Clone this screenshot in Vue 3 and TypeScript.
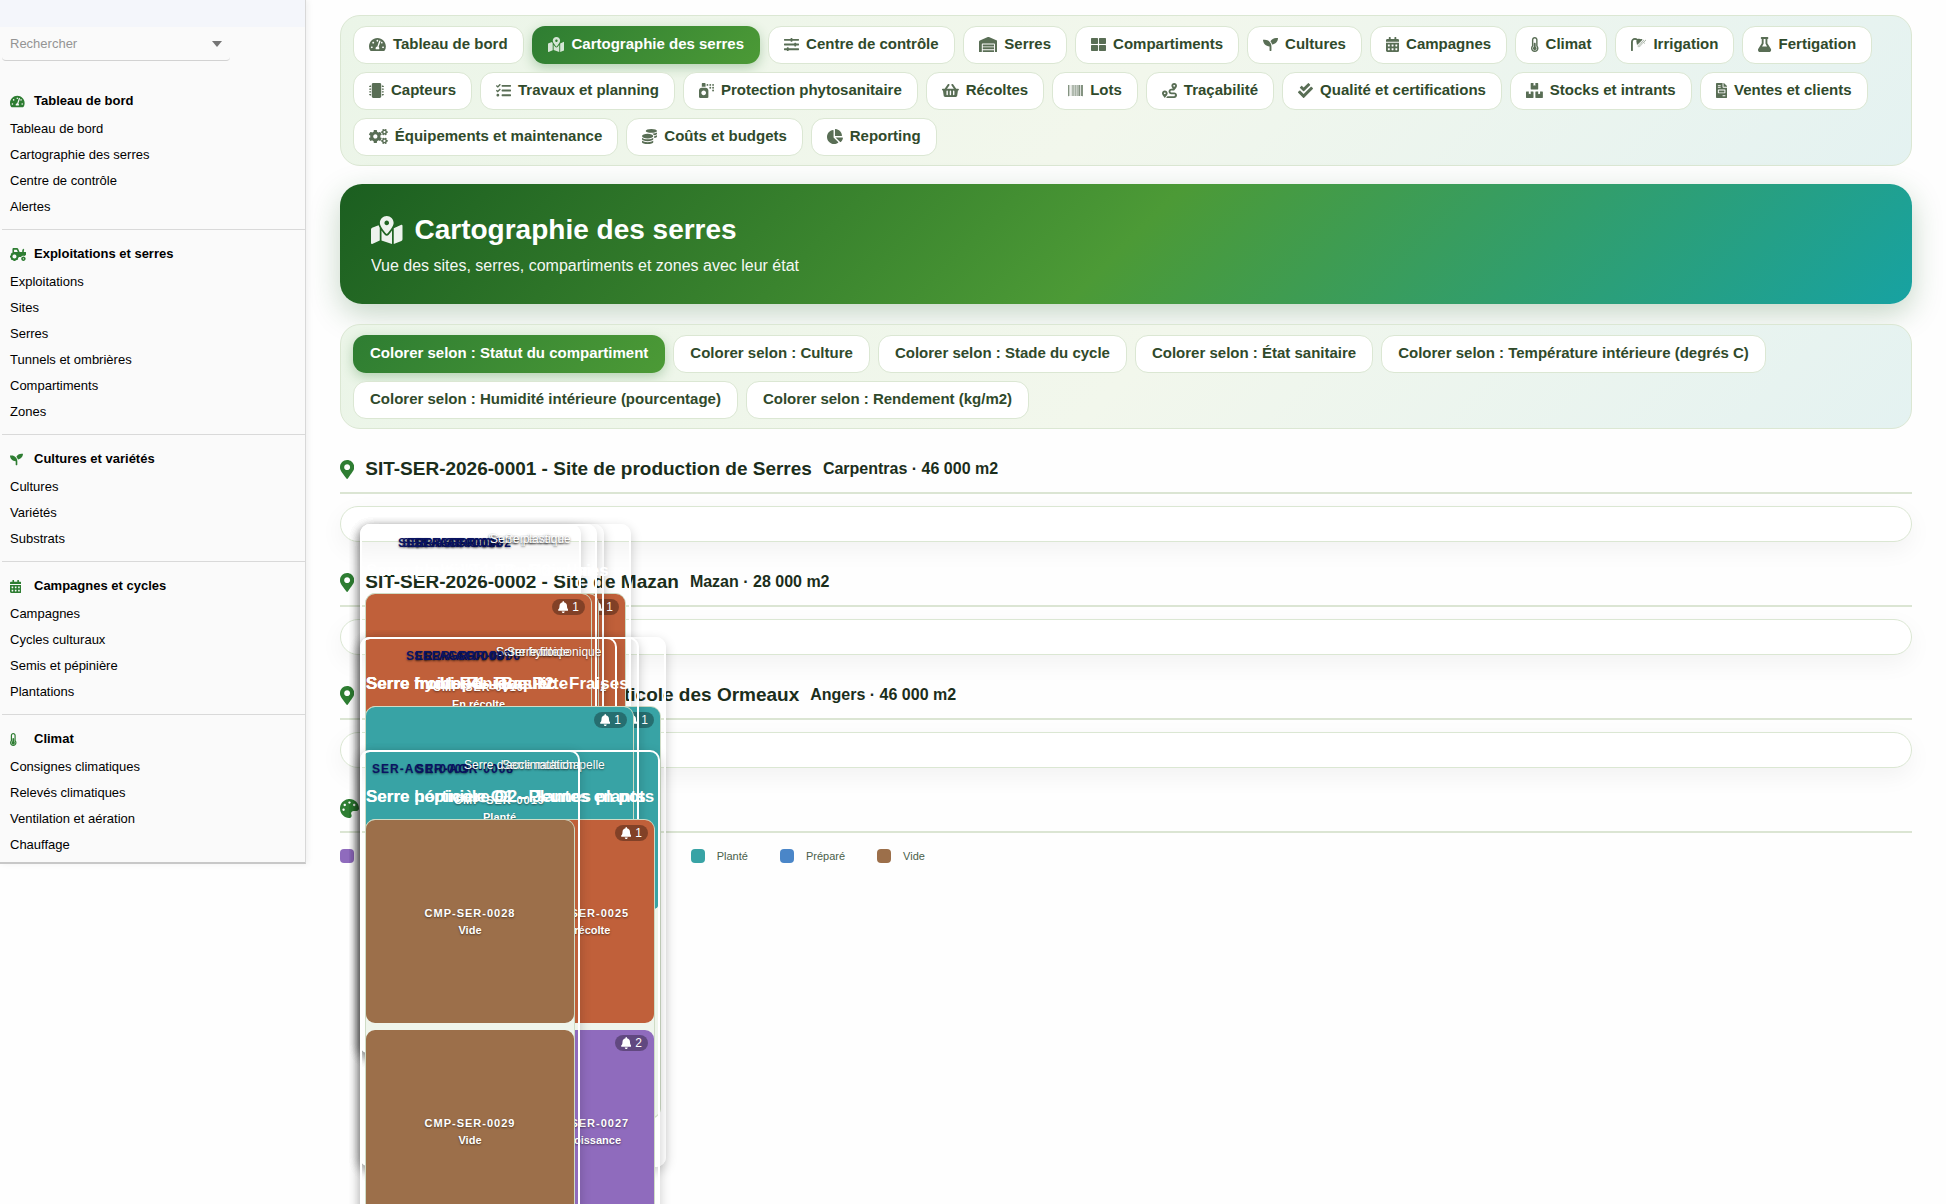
<script setup lang="ts">
import { defineComponent, h, ref } from 'vue'

interface IconShape {
  w: number
  d: string
}

const square = (x: number, y: number) =>
  `M${x} ${y}c0-6.6 5.4-12 12-12h40c6.6 0 12 5.4 12 12v40c0 6.6-5.4 12-12 12h-40c-6.6 0-12-5.4-12-12z`
const dot = (x: number, y: number, r: number) =>
  `M${x - r} ${y}a${r} ${r} 0 1 0 ${2 * r} 0a${r} ${r} 0 1 0 ${-2 * r} 0z`
const pins = [88, 184, 280, 376]
  .map(
    (y) =>
      `M440 ${y}h42a6 6 0 0 1 6 6v6h18a6 6 0 0 1 6 6v12a6 6 0 0 1-6 6h-18v6a6 6 0 0 1-6 6h-42z` +
      `M72 ${y}v48H30a6 6 0 0 1-6-6v-6H6a6 6 0 0 1-6-6v-12a6 6 0 0 1 6-6h18v-6a6 6 0 0 1 6-6z`,
  )
  .join('')
const smallCog = (y: number) =>
  `M512.1 ${y}l-8.2 14.3c-3 5.3-9.4 7.5-15.1 5.4-11.8-4.4-22.6-10.7-32.1-18.6-4.6-3.8-5.8-10.5-2.8-15.7l8.2-14.3c-6.9-8-12.3-17.3-15.9-27.4h-16.5c-6 0-11.2-4.3-12.2-10.3-2-12-2.1-24.6 0-37.1 1-6 6.2-10.4 12.2-10.4h16.5c3.6-10.1 9-19.4 15.9-27.4l-8.2-14.3c-3-5.2-1.9-11.9 2.8-15.7 9.5-7.9 20.4-14.2 32.1-18.6 5.7-2.1 12.1.1 15.1 5.4l8.2 14.3c10.5-1.9 21.2-1.9 31.7 0l8.2-14.3c3-5.3 9.4-7.5 15.1-5.4 11.8 4.4 22.6 10.7 32.1 18.6 4.6 3.8 5.8 10.5 2.8 15.7l-8.2 14.3c6.9 8 12.3 17.3 15.9 27.4h16.5c6 0 11.2 4.3 12.2 10.3 2 12 2.1 24.6 0 37.1-1 6-6.2 10.4-12.2 10.4h-16.5c-3.6 10.1-9 19.4-15.9 27.4l8.2 14.3c3 5.2 1.9 11.9-2.8 15.7-9.5 7.9-20.4 14.2-32.1 18.6-5.7 2.1-12.1-.1-15.1-5.4l-8.2-14.3c-10.4 1.9-21.2 1.9-31.7 0zm-10.5-58.8c38.5 29.6 82.4-14.3 52.8-52.8-38.5-29.7-82.4 14.3-52.8 52.8z`

const icons: Record<string, IconShape> = {
  gauge: { w: 576, d: 'M288 32C128.94 32 0 160.94 0 320c0 52.8 14.25 102.26 39.06 144.8 5.61 9.62 16.3 15.2 27.44 15.2h443c11.14 0 21.83-5.58 27.44-15.2C561.75 422.26 576 372.8 576 320c0-159.06-128.94-288-288-288zm0 64c14.71 0 26.58 10.13 30.32 23.65-1.11 2.26-2.64 4.23-3.45 6.67l-9.22 27.67c-5.13 3.49-10.97 6.01-17.64 6.01-17.67 0-32-14.33-32-32S270.33 96 288 96zM96 384c-17.67 0-32-14.33-32-32s14.33-32 32-32 32 14.33 32 32-14.33 32-32 32zm48-160c-17.67 0-32-14.33-32-32s14.33-32 32-32 32 14.33 32 32-14.33 32-32 32zm246.77-72.41l-61.33 184C343.13 347.33 352 364.54 352 384c0 11.72-3.38 22.55-8.88 32H232.88c-5.5-9.45-8.88-20.28-8.88-32 0-33.94 26.5-61.43 59.9-63.59l61.34-184.01c4.17-12.56 17.73-19.45 30.36-15.17 12.57 4.19 19.35 17.79 15.17 30.36zm14.66 57.2l15.52-46.55c3.47-1.29 7.13-2.23 11.05-2.23 17.67 0 32 14.33 32 32s-14.33 32-32 32c-11.38-.01-20.89-6.28-26.57-15.22zM480 384c-17.67 0-32-14.33-32-32s14.33-32 32-32 32 14.33 32 32-14.33 32-32 32z' },
  map: { w: 576, d: 'M288 0c-69.59 0-126 56.41-126 126 0 56.26 82.35 158.8 113.9 196.02 6.39 7.54 17.82 7.54 24.2 0C331.65 284.8 414 182.26 414 126 414 56.41 357.59 0 288 0zm0 168c-23.2 0-42-18.8-42-42s18.8-42 42-42 42 18.8 42 42-18.8 42-42 42zM20.12 215.95A32.006 32.006 0 0 0 0 245.66v250.32c0 11.32 11.43 19.06 21.94 14.86L160 448V214.92c-8.84-15.98-16.07-31.54-21.25-46.42L20.12 215.95zM288 359.67c-14.07 0-27.38-6.18-36.51-16.96-19.66-23.2-40.57-49.62-59.49-76.72v182l192 64V266c-18.92 27.09-39.82 53.52-59.49 76.72-9.13 10.77-22.44 16.95-36.51 16.95zm266.06-198.51L416 224v288l139.88-55.95A31.996 31.996 0 0 0 576 426.34V176.02c0-11.32-11.43-19.06-21.94-14.86z' },
  sliders: { w: 512, d: 'M496 384H160v-16c0-8.8-7.2-16-16-16h-32c-8.8 0-16 7.2-16 16v16H16c-8.8 0-16 7.2-16 16v32c0 8.8 7.2 16 16 16h80v16c0 8.8 7.2 16 16 16h32c8.8 0 16-7.2 16-16v-16h336c8.8 0 16-7.2 16-16v-32c0-8.8-7.2-16-16-16zm0-160h-80v-16c0-8.8-7.2-16-16-16h-32c-8.8 0-16 7.2-16 16v16H16c-8.8 0-16 7.2-16 16v32c0 8.8 7.2 16 16 16h336v16c0 8.8 7.2 16 16 16h32c8.8 0 16-7.2 16-16v-16h80c8.8 0 16-7.2 16-16v-32c0-8.8-7.2-16-16-16zm0-160H288V48c0-8.8-7.2-16-16-16h-32c-8.8 0-16 7.2-16 16v16H16C7.2 64 0 71.2 0 80v32c0 8.8 7.2 16 16 16h208v16c0 8.8 7.2 16 16 16h32c8.8 0 16-7.2 16-16v-16h208c8.8 0 16-7.2 16-16V80c0-8.8-7.2-16-16-16z' },
  warehouse: { w: 640, d: 'M504 352H136.4c-4.4 0-8 3.6-8 8l-.1 48c0 4.4 3.6 8 8 8H504c4.4 0 8-3.6 8-8v-48c0-4.4-3.6-8-8-8zm0 96H136.1c-4.4 0-8 3.6-8 8l-.1 48c0 4.4 3.6 8 8 8h368c4.4 0 8-3.6 8-8v-48c0-4.4-3.6-8-8-8zm0-192H136.6c-4.4 0-8 3.6-8 8l-.1 48c0 4.4 3.6 8 8 8H504c4.4 0 8-3.6 8-8v-48c0-4.4-3.6-8-8-8zm106.5-139L338.4 3.7a48.15 48.15 0 0 0-36.9 0L29.5 117C11.7 124.5 0 141.9 0 161.3V504c0 4.4 3.6 8 8 8h80c4.4 0 8-3.6 8-8V256c0-17.6 14.6-32 32.6-32h382.8c18 0 32.6 14.4 32.6 32v248c0 4.4 3.6 8 8 8h80c4.4 0 8-3.6 8-8V161.3c0-19.4-11.7-36.8-29.5-44.3z' },
  grid: { w: 512, d: 'M296 32h192c13.255 0 24 10.745 24 24v160c0 13.255-10.745 24-24 24H296c-13.255 0-24-10.745-24-24V56c0-13.255 10.745-24 24-24zm-80 0H24C10.745 32 0 42.745 0 56v160c0 13.255 10.745 24 24 24h192c13.255 0 24-10.745 24-24V56c0-13.255-10.745-24-24-24zM0 296v160c0 13.255 10.745 24 24 24h192c13.255 0 24-10.745 24-24V296c0-13.255-10.745-24-24-24H24c-13.255 0-24 10.745-24 24zm296 184h192c13.255 0 24-10.745 24-24V296c0-13.255-10.745-24-24-24H296c-13.255 0-24 10.745-24 24v160c0 13.255 10.745 24 24 24z' },
  seedling: { w: 512, d: 'M64 96H0c0 123.7 100.3 224 224 224v144c0 8.8 7.2 16 16 16h32c8.8 0 16-7.2 16-16V320C288 196.3 187.7 96 64 96zm384-64c-84.2 0-157.4 46.5-195.7 115.2 27.7 30.2 48.2 66.9 59 107.6C424 243.1 512 147.9 512 32h-64z' },
  calendar: { w: 448, d: 'M0 464c0 26.5 21.5 48 48 48h352c26.5 0 48-21.5 48-48V192H0v272z' + square(320, 268) + square(320, 396) + square(192, 268) + square(192, 396) + square(64, 268) + square(64, 396) + 'M400 64h-48V16c0-8.8-7.2-16-16-16h-32c-8.8 0-16 7.2-16 16v48H160V16c0-8.8-7.2-16-16-16h-32c-8.8 0-16 7.2-16 16v48H48C21.5 64 0 85.5 0 112v48h448v-48c0-26.5-21.5-48-48-48z' },
  thermometer: { w: 256, d: 'M192 384c0 35.346-28.654 64-64 64s-64-28.654-64-64c0-23.685 12.876-44.349 32-55.417V224c0-17.673 14.327-32 32-32s32 14.327 32 32v104.583c19.124 11.068 32 31.732 32 55.417zm32-84.653c19.912 22.563 32 52.194 32 84.653 0 70.696-57.303 128-128 128-.299 0-.609-.001-.909-.003C56.789 511.509-.357 453.636.002 383.333.166 351.135 12.225 321.755 32 299.347V96c0-53.019 42.981-96 96-96s96 42.981 96 96v203.347zM208 384c0-34.339-19.37-52.19-32-66.502V96c0-26.467-21.533-48-48-48S80 69.533 80 96v221.498c-12.732 14.428-31.825 32.1-31.999 66.08-.224 43.876 35.563 80.116 79.423 80.42L128 464c44.112 0 80-35.888 80-80z' },
  shower: { w: 512, d: 'M0 464V166.9C0 92.5 60.5 32 134.9 32c34.6 0 68 13.3 93.2 37l.9.9c38.6-18.3 82-12.7 115 8l7.5-7.5a16 16 0 0 1 22.6 0l11.3 11.3a16 16 0 0 1 0 22.6L229.7 260a16 16 0 0 1-22.6 0l-11.3-11.3a16 16 0 0 1 0-22.6l7.5-7.5c-24-36-26-70-12-104C176 102 156 96 134.9 96 95.8 96 64 127.8 64 166.9V464a16 16 0 0 1-16 16H16a16 16 0 0 1-16-16z' + [[400, 144], [432, 176], [464, 144], [496, 112], [368, 176], [400, 208], [336, 208], [368, 240], [304, 240], [336, 272], [272, 272], [304, 304], [272, 336], [432, 112], [464, 208], [240, 304]].map(([x, y]) => dot(x, y, 16)).join('') },
  flask: { w: 448, d: 'M437.2 403.5L320 215V64h8c13.3 0 24-10.7 24-24V24c0-13.3-10.7-24-24-24H120c-13.3 0-24 10.7-24 24v16c0 13.3 10.7 24 24 24h8v151L10.8 403.5C-18.5 450.6 15.3 512 70.9 512h306.2c55.7 0 89.4-61.5 60.1-108.5zM137.9 320l48.2-77.6c3.7-5.2 5.8-11.6 5.8-18.4V64h64v160c0 6.9 2.2 13.2 5.8 18.4l48.2 77.6h-172z' },
  chip: { w: 512, d: 'M416 48v416c0 26.51-21.49 48-48 48H144c-26.51 0-48-21.49-48-48V48c0-26.51 21.49-48 48-48h224c26.51 0 48 21.49 48 48z' + pins },
  tasks: { w: 512, d: 'M139.61 35.5a12 12 0 0 0-17 0L58.93 98.81l-22.7-22.12a12 12 0 0 0-17 0L3.53 92.41a12 12 0 0 0 0 17l47.59 47.4a12.78 12.78 0 0 0 17.61 0l15.59-15.62L156.52 69a12.09 12.09 0 0 0 .09-17zm0 159.19a12 12 0 0 0-17 0l-63.68 63.72-22.7-22.1a12 12 0 0 0-17 0L3.53 252a12 12 0 0 0 0 17L51 316.5a12.77 12.77 0 0 0 17.6 0l15.7-15.69 72.2-72.22a12 12 0 0 0 .09-16.9zM64 368c-26.49 0-48.59 21.5-48.59 48S37.53 464 64 464a48 48 0 0 0 0-96zm432 16H208a16 16 0 0 0-16 16v32a16 16 0 0 0 16 16h288a16 16 0 0 0 16-16v-32a16 16 0 0 0-16-16zm0-320H208a16 16 0 0 0-16 16v32a16 16 0 0 0 16 16h288a16 16 0 0 0 16-16V80a16 16 0 0 0-16-16zm0 160H208a16 16 0 0 0-16 16v32a16 16 0 0 0 16 16h288a16 16 0 0 0 16-16v-32a16 16 0 0 0-16-16z' },
  spray: { w: 512, d: 'M224 32c0-17.67-14.33-32-32-32h-64c-17.67 0-32 14.33-32 32v96h128V32zm0 128H96c-53.02 0-96 42.98-96 96v224c0 17.67 14.33 32 32 32h256c17.67 0 32-14.33 32-32V256c0-53.02-42.98-96-96-96zm-64 256c-44.18 0-80-35.82-80-80s35.82-80 80-80 80 35.82 80 80-35.82 80-80 80z' + [[288, 64], [384, 64], [480, 64], [384, 160], [480, 160], [480, 256]].map(([x, y]) => dot(x, y, 32)).join('') },
  basket: { w: 576, d: 'M576 216v16c0 13.255-10.745 24-24 24h-8l-26.113 182.788C514.509 462.435 494.257 480 470.37 480H105.63c-23.887 0-44.139-17.565-47.518-41.212L32 256h-8c-13.255 0-24-10.745-24-24v-16c0-13.255 10.745-24 24-24h67.341l106.78-146.821c10.395-14.292 30.407-17.453 44.701-7.058 14.293 10.395 17.453 30.408 7.058 44.701L170.477 192h235.046L326.12 82.821c-10.395-14.292-7.234-34.306 7.059-44.701 14.291-10.395 34.306-7.235 44.701 7.058L484.659 192H552c13.255 0 24 10.745 24 24zM312 392V280c0-13.255-10.745-24-24-24s-24 10.745-24 24v112c0 13.255 10.745 24 24 24s24-10.745 24-24zm112 0V280c0-13.255-10.745-24-24-24s-24 10.745-24 24v112c0 13.255 10.745 24 24 24s24-10.745 24-24zm-224 0V280c0-13.255-10.745-24-24-24s-24 10.745-24 24v112c0 13.255 10.745 24 24 24s24-10.745 24-24z' },
  barcode: { w: 512, d: 'M0 448V64h18v384H0zm26.857-.273V64H36v383.727h-9.143zm27.143 0V64h8.857v383.727H54zm44.857 0V64h8.857v383.727h-8.857zm36 0V64h17.714v383.727h-17.714zm44.857 0V64h8.857v383.727h-8.857zm18 0V64h8.857v383.727h-8.857zm18 0V64h8.857v383.727h-8.857zm35.715 0V64h18v383.727h-18zm44.857 0V64h18v383.727h-18zm35.999 0V64h18.001v383.727h-18.001zm36.001 0V64h18.001v383.727h-18.001zm26.857 0V64h18v383.727h-18zm45.143 0V64h26.857v383.727h-26.857zm35.714 0V64h9.143v383.727H476zm18 .273V64h18v384h-18z' },
  route: { w: 512, d: 'M416 320h-96c-17.6 0-32-14.4-32-32s14.4-32 32-32h96s96-107 96-160-43-96-96-96-96 43-96 96c0 25.5 22.2 63.4 45.3 96H320c-52.9 0-96 43.1-96 96s43.1 96 96 96h96c17.6 0 32 14.4 32 32s-14.4 32-32 32H185.5c-16 24.8-33.8 47.7-47.3 64H416c52.9 0 96-43.1 96-96s-43.1-96-96-96zm0-256c17.7 0 32 14.3 32 32s-14.3 32-32 32-32-14.3-32-32 14.3-32 32-32zM96 256c-53 0-96 43-96 96s96 160 96 160 96-107 96-160-43-96-96-96zm0 128c-17.7 0-32-14.3-32-32s14.3-32 32-32 32 14.3 32 32-14.3 32-32 32z' },
  checks: { w: 512, d: 'M505 174.8l-39.6-39.6c-9.4-9.4-24.6-9.4-33.9 0L192 374.7 80.6 263.2c-9.4-9.4-24.6-9.4-33.9 0L7 302.9c-9.4 9.4-9.4 24.6 0 34L175 505c9.4 9.4 24.6 9.4 33.9 0l296-296.2c9.4-9.5 9.4-24.7.1-34zm-324.3 106c6.2 6.3 16.4 6.3 22.6 0l208-208.2c6.2-6.3 6.2-16.4 0-22.6L366.1 4.7c-6.2-6.3-16.4-6.3-22.6 0L192 156.2l-55.4-55.5c-6.2-6.3-16.4-6.3-22.6 0L68.7 146c-6.2 6.3-6.2 16.4 0 22.6l112 112.2z' },
  boxes: { w: 576, d: 'M560 288h-80v96l-32-21.3-32 21.3v-96h-80c-8.8 0-16 7.2-16 16v192c0 8.8 7.2 16 16 16h224c8.8 0 16-7.2 16-16V304c0-8.8-7.2-16-16-16zm-384-64h224c8.8 0 16-7.2 16-16V16c0-8.8-7.2-16-16-16h-80v96l-32-21.3L256 96V0h-80c-8.8 0-16 7.2-16 16v192c0 8.8 7.2 16 16 16zm64 64h-80v96l-32-21.3L96 384v-96H16c-8.8 0-16 7.2-16 16v192c0 8.8 7.2 16 16 16h224c8.8 0 16-7.2 16-16V304c0-8.8-7.2-16-16-16z' },
  invoice: { w: 384, d: 'M288 256H96v64h192v-64zm89-151L279.1 7c-4.5-4.5-10.6-7-17-7H256v128h128v-6.1c0-6.3-2.5-12.4-7-16.9zm-153 31V0H24C10.7 0 0 10.7 0 24v464c0 13.3 10.7 24 24 24h336c13.3 0 24-10.7 24-24V160H248c-13.2 0-24-10.8-24-24zM64 72c0-4.42 3.58-8 8-8h80c4.42 0 8 3.58 8 8v16c0 4.42-3.58 8-8 8H72c-4.42 0-8-3.58-8-8V72zm0 64c0-4.42 3.58-8 8-8h80c4.42 0 8 3.58 8 8v16c0 4.42-3.58 8-8 8H72c-4.42 0-8-3.58-8-8v-16zm256 304c0 4.42-3.58 8-8 8h-80c-4.42 0-8-3.58-8-8v-16c0-4.42 3.58-8 8-8h80c4.42 0 8 3.58 8 8v16zm0-200v96c0 8.84-7.16 16-16 16H80c-8.84 0-16-7.16-16-16v-96c0-8.84 7.16-16 16-16h224c8.84 0 16 7.16 16 16z' },
  cogs: { w: 640, d: smallCog(191) + smallCog(489.9) + 'M386.3 286.1l33.7 16.8c10.1 5.8 14.5 18.1 10.5 29.1-8.9 24.2-26.4 46.4-42.6 65.8-7.4 8.9-20.2 11.1-30.3 5.3l-29.1-16.8c-16 13.7-34.6 24.6-54.9 31.7v33.6c0 11.6-8.3 21.6-19.7 23.6-24.6 4.2-50.4 4.4-75.9 0-11.5-2-20-11.9-20-23.6V418c-20.3-7.2-38.9-18-54.9-31.7L74 403c-10 5.8-22.9 3.6-30.3-5.3-16.2-19.4-33.3-41.6-42.2-65.7-4-10.9.4-23.2 10.5-29.1l33.3-16.8c-3.9-20.9-3.9-42.4 0-63.4L12 205.8c-10.1-5.8-14.6-18.1-10.5-29 8.9-24.2 26-46.4 42.2-65.8 7.4-8.9 20.2-11.1 30.3-5.3l29.1 16.8c16-13.7 34.6-24.6 54.9-31.7V57.1c0-11.5 8.2-21.5 19.6-23.5 24.6-4.2 50.5-4.4 76-.1 11.5 2 20 11.9 20 23.6v33.6c20.3 7.2 38.9 18 54.9 31.7l29.1-16.8c10-5.8 22.9-3.6 30.3 5.3 16.2 19.4 33.2 41.6 42.1 65.8 4 10.9.1 23.2-10 29.1l-33.7 16.8c3.9 21 3.9 42.5 0 63.5zm-117.6 21.1c59.2-77-28.7-164.9-105.7-105.7-59.2 77 28.7 164.9 105.7 105.7z' },
  coins: { w: 512, d: 'M0 405.3V448c0 35.3 86 64 192 64s192-28.7 192-64v-42.7C342.7 434.4 267.2 448 192 448S41.3 434.4 0 405.3zM320 128c106 0 192-28.7 192-64S426 0 320 0 128 28.7 128 64s86 64 192 64zM0 300.4V352c0 35.3 86 64 192 64s192-28.7 192-64v-51.6c-41.3 34-116.9 51.6-192 51.6S41.3 334.4 0 300.4zm416 11c57.3-11.1 96-31.7 96-55.4v-42.7c-23.2 16.4-57.3 27.6-96 34.5v63.6zM192 160C86 160 0 195.8 0 240s86 80 192 80 192-35.8 192-80-86-80-192-80zm219.3 56.3c60-10.8 100.7-32 100.7-56.3v-42.7c-35.5 25.1-96.5 38.6-160.7 41.8 29.5 14.3 51.2 33.5 60 57.2z' },
  pie: { w: 544, d: 'M527.79 288H290.5l158.03 158.03c6.04 6.04 15.98 6.53 22.19.68 38.7-36.46 65.32-85.61 73.13-140.86 1.34-9.46-6.51-17.85-16.06-17.85zm-15.83-64.8C503.72 103.74 408.26 8.28 288.8.04 279.68-.59 272 7.1 272 16.24V240h223.77c9.14 0 16.82-7.68 16.19-16.8zM224 288V50.71c0-9.55-8.39-17.4-17.84-16.06C86.99 51.49-4.1 155.6.14 280.37 4.5 408.51 114.83 513.59 243.03 511.98c50.4-.63 96.97-16.87 135.26-44.03 7.9-5.6 8.42-17.23 1.57-24.08L224 288z' },
  marker: { w: 384, d: 'M172.268 501.67C26.97 291.031 0 269.413 0 192 0 85.961 85.961 0 192 0s192 85.961 192 192c0 77.413-26.97 99.031-172.268 309.67-9.535 13.774-29.93 13.773-39.464 0zM192 272c44.183 0 80-35.817 80-80s-35.817-80-80-80-80 35.817-80 80 35.817 80 80 80z' },
  palette: { w: 512, d: 'M204.3 5C104.9 24.4 24.8 104.3 5.2 203.4c-37 187 131.7 326.4 258.8 306.7 41.2-6.4 61.4-54.6 42.5-91.7-23.1-45.4 9.9-98.4 60.9-98.4h79.7c35.8 0 64.8-29.6 64.9-65.3C511.5 97.1 368.1-26.9 204.3 5zM96 320c-17.7 0-32-14.3-32-32s14.3-32 32-32 32 14.3 32 32-14.3 32-32 32zm32-128c-17.7 0-32-14.3-32-32s14.3-32 32-32 32 14.3 32 32-14.3 32-32 32zm128-64c-17.7 0-32-14.3-32-32s14.3-32 32-32 32 14.3 32 32-14.3 32-32 32zm128 64c-17.7 0-32-14.3-32-32s14.3-32 32-32 32 14.3 32 32-14.3 32-32 32z' },
  bell: { w: 448, d: 'M224 512c35.32 0 63.97-28.65 63.97-64H160.03c0 35.35 28.65 64 63.97 64zm215.39-149.71c-19.32-20.76-55.47-51.99-55.47-154.29 0-77.7-54.48-139.9-127.94-155.16V32c0-17.67-14.32-32-31.98-32s-31.98 14.33-31.98 32v20.84C118.56 68.1 64.08 130.3 64.08 208c0 102.3-36.15 133.53-55.47 154.29-6 6.45-8.66 14.16-8.61 21.71.11 16.4 12.98 32 32.1 32h383.8c19.12 0 32-15.6 32.1-32 .05-7.55-2.61-15.27-8.61-21.71z' },
  tractor: { w: 640, d: 'M528 336c-48.6 0-88 39.4-88 88s39.4 88 88 88 88-39.4 88-88-39.4-88-88-88zm0 112c-13.23 0-24-10.77-24-24s10.77-24 24-24 24 10.77 24 24-10.77 24-24 24zm80-288h-64v-40.2c0-14.12 4.7-27.76 13.15-38.84 4.42-5.8 3.55-14.06-1.32-19.49L534.2 37.3c-6.66-7.45-18.32-6.92-24.7.78C490.58 60.9 480 89.81 480 119.8V160H377.67L321.58 29.14A47.914 47.914 0 0 0 277.45 0H144c-26.47 0-48 21.53-48 48v146.52c-8.63-6.73-20.96-6.46-28.89 1.47L36 227.1c-8.59 8.59-8.59 22.52 0 31.11l5.06 5.06c-4.99 9.26-8.96 18.82-11.91 28.72H22c-12.15 0-22 9.85-22 22v44c0 12.15 9.85 22 22 22h7.14c2.96 9.91 6.92 19.46 11.91 28.73l-5.06 5.06c-8.59 8.59-8.59 22.52 0 31.11L67.1 476c8.59 8.59 22.52 8.59 31.11 0l5.06-5.06c9.26 4.99 18.82 8.96 28.72 11.91V490c0 12.15 9.85 22 22 22h44c12.15 0 22-9.85 22-22v-7.14c9.9-2.95 19.46-6.92 28.72-11.91l5.06 5.06c8.59 8.59 22.52 8.59 31.11 0l31.11-31.11c8.59-8.59 8.59-22.52 0-31.11l-5.06-5.06c4.99-9.26 8.96-18.82 11.91-28.72H330c12.15 0 22-9.85 22-22v-6h80.54c21.91-28.99 56.32-48 95.46-48 18.64 0 36.07 4.61 51.8 12.2l50.82-50.82c6-6 9.37-14.14 9.37-22.63V192c.01-17.67-14.32-32-31.99-32zM176 416c-44.18 0-80-35.82-80-80s35.82-80 80-80 80 35.82 80 80-35.82 80-80 80zm22-256h-38V64h106.89l41.15 96H198z' },
}

const Icon = defineComponent({
  props: { name: { type: String, required: true }, size: { type: Number, required: true } },
  setup: (props) => () => {
    const { w, d } = icons[props.name]
    return h(
      'svg',
      {
        viewBox: `0 0 ${w} 512`,
        width: (props.size * w) / 512,
        height: props.size,
        fill: 'currentColor',
        'fill-rule': 'evenodd',
        'aria-hidden': 'true',
      },
      [h('path', { d })],
    )
  },
})

const search = ref('')
const activeMode = ref('Statut du compartiment')

const menu = [
  { title: 'Tableau de bord', icon: 'gauge', items: ['Tableau de bord', 'Cartographie des serres', 'Centre de contrôle', 'Alertes'] },
  { title: 'Exploitations et serres', icon: 'tractor', items: ['Exploitations', 'Sites', 'Serres', 'Tunnels et ombrières', 'Compartiments', 'Zones'] },
  { title: 'Cultures et variétés', icon: 'seedling', items: ['Cultures', 'Variétés', 'Substrats'] },
  { title: 'Campagnes et cycles', icon: 'calendar', items: ['Campagnes', 'Cycles culturaux', 'Semis et pépinière', 'Plantations'] },
  { title: 'Climat', icon: 'thermometer', items: ['Consignes climatiques', 'Relevés climatiques', 'Ventilation et aération', 'Chauffage'] },
]

const tabs = [
  { label: 'Tableau de bord', icon: 'gauge' },
  { label: 'Cartographie des serres', icon: 'map', active: true },
  { label: 'Centre de contrôle', icon: 'sliders' },
  { label: 'Serres', icon: 'warehouse' },
  { label: 'Compartiments', icon: 'grid' },
  { label: 'Cultures', icon: 'seedling' },
  { label: 'Campagnes', icon: 'calendar' },
  { label: 'Climat', icon: 'thermometer' },
  { label: 'Irrigation', icon: 'shower' },
  { label: 'Fertigation', icon: 'flask' },
  { label: 'Capteurs', icon: 'chip' },
  { label: 'Travaux et planning', icon: 'tasks' },
  { label: 'Protection phytosanitaire', icon: 'spray' },
  { label: 'Récoltes', icon: 'basket' },
  { label: 'Lots', icon: 'barcode' },
  { label: 'Traçabilité', icon: 'route' },
  { label: 'Qualité et certifications', icon: 'checks' },
  { label: 'Stocks et intrants', icon: 'boxes' },
  { label: 'Ventes et clients', icon: 'invoice' },
  { label: 'Équipements et maintenance', icon: 'cogs' },
  { label: 'Coûts et budgets', icon: 'coins' },
  { label: 'Reporting', icon: 'pie' },
]

const modes = [
  'Statut du compartiment',
  'Culture',
  'Stade du cycle',
  'État sanitaire',
  'Température intérieure (degrés C)',
  'Humidité intérieure (pourcentage)',
  'Rendement (kg/m2)',
]

interface Tile {
  code: string
  status: string
  color: string
  alerts?: number
}
interface House {
  width: number
  code: string
  codeX: number
  type: string
  typeX: number
  name: string
  columns: number
  tiles: Tile[]
}

const violet = '#8f6bbd'
const orange = '#c0603a'
const teal = '#38a3a5'
const blue = '#4a86c8'
const brown = '#9c6f4a'

const sites: { name: string; place: string; houses: House[] }[] = [
  {
    name: 'SIT-SER-2026-0001 - Site de production de Serres',
    place: 'Carpentras · 46 000 m2',
    houses: [
      { width: 221, code: 'SER-AGR-0001', codeX: 32, type: 'Serre verre', typeX: 122, name: 'Serre verre V1 - Tomates', columns: 1, tiles: [] },
      {
        width: 271, code: 'SER-AGR-0002', codeX: 48, type: 'Serre plastique', typeX: 122, name: 'Serre multichapelle M2 - Laitues', columns: 2,
        tiles: [
          { code: 'CMP-SER-0001', status: 'En récolte', color: orange, alerts: 1 },
          { code: 'CMP-SER-0002', status: 'En récolte', color: orange, alerts: 1 },
        ],
      },
      {
        width: 244, code: 'SER-AGR-0003', codeX: 40, type: 'Serre verre', typeX: 139, name: 'Serre plastique P3 - Poivrons', columns: 1,
        tiles: [{ code: 'CMP-SER-0006', status: 'En récolte', color: orange }],
      },
      {
        width: 237, code: 'SER-AGR-0004', codeX: 36, type: 'Serre plastique', typeX: 124, name: 'Serre tunnel T4 - Concombres', columns: 1,
        tiles: [{ code: 'CMP-SER-0010', status: 'En récolte', color: orange, alerts: 1 }],
      },
    ],
  },
  {
    name: 'SIT-SER-2026-0002 - Site de Mazan',
    place: 'Mazan · 28 000 m2',
    houses: [
      { width: 257, code: 'SER-AGR-0005', codeX: 40, type: 'Serre froide', typeX: 130, name: 'Serre froide F1 - Basilic', columns: 1, tiles: [] },
      {
        width: 306, code: 'SER-AGR-0006', codeX: 57, type: 'Serre hydroponique', typeX: 130, name: 'Serre hydroponique R2 - Fraises', columns: 2,
        tiles: [
          { code: 'CMP-SER-0013', status: 'Planté', color: teal, alerts: 1 },
          { code: 'CMP-SER-0014', status: 'Planté', color: teal, alerts: 1 },
        ],
      },
      {
        width: 279, code: 'SER-AGR-0007', codeX: 48, type: 'Serre froide', typeX: 141, name: 'Serre multi F4 - Roquette', columns: 1,
        tiles: [{ code: 'CMP-SER-0019', status: 'Planté', color: teal, alerts: 1 }],
      },
    ],
  },
  {
    name: 'SIT-SER-2026-0003 - Site horticole des Ormeaux',
    place: 'Angers · 46 000 m2',
    houses: [
      {
        width: 300, code: 'SER-AGR-0008', codeX: 50, type: 'Serre multichapelle', typeX: 136, name: 'Serre horticole O1 - Plantes en pots', columns: 2,
        tiles: [
          { code: 'CMP-SER-0024', status: 'En récolte', color: orange },
          { code: 'CMP-SER-0025', status: 'En récolte', color: orange, alerts: 1 },
          { code: 'CMP-SER-0026', status: 'En croissance', color: violet },
          { code: 'CMP-SER-0027', status: 'En croissance', color: violet, alerts: 2 },
        ],
      },
      {
        width: 220, code: 'SER-AGR-0009', codeX: 6, type: "Serre d'acclimatation", typeX: 98, name: 'Serre pépinière O2 - Jeunes plants', columns: 1,
        tiles: [
          { code: 'CMP-SER-0028', status: 'Vide', color: brown },
          { code: 'CMP-SER-0029', status: 'Vide', color: brown },
        ],
      },
    ],
  },
]

const legend = [
  { label: 'En croissance', color: violet },
  { label: 'En floraison', color: '#d98cb3' },
  { label: 'En récolte', color: orange },
  { label: 'Planté', color: teal },
  { label: 'Préparé', color: blue },
  { label: 'Vide', color: brown },
]
</script>

<template>
  <div class="app">
    <aside class="sidebar">
      <div class="search">
        <input v-model="search" type="text" placeholder="Rechercher" aria-label="Rechercher" />
        <svg class="caret" viewBox="0 0 10 6" width="10" height="6" aria-hidden="true"><path d="M0 0h10L5 6z" /></svg>
      </div>
      <nav class="menu" aria-label="Menu principal">
        <section v-for="group in menu" :key="group.title" class="group">
          <h2><span class="group-icon"><Icon :name="group.icon" :size="13" /></span>{{ group.title }}</h2>
          <ul>
            <li v-for="item in group.items" :key="item"><a href="#">{{ item }}</a></li>
          </ul>
        </section>
      </nav>
    </aside>

    <main>
      <nav class="bar" aria-label="Modules">
        <a v-for="tab in tabs" :key="tab.label" href="#" class="pill" :class="{ active: tab.active }">
          <Icon :name="tab.icon" :size="15" />{{ tab.label }}
        </a>
      </nav>

      <header class="hero">
        <h1><Icon name="map" :size="28" />Cartographie des serres</h1>
        <p>Vue des sites, serres, compartiments et zones avec leur état</p>
      </header>

      <div class="bar">
        <button
          v-for="mode in modes"
          :key="mode"
          type="button"
          class="pill mode"
          :class="{ active: mode === activeMode }"
          @click="activeMode = mode"
        >
          Colorer selon : {{ mode }}
        </button>
      </div>

      <section v-for="site in sites" :key="site.name">
        <h2 class="heading"><Icon name="marker" :size="19" /><span>{{ site.name }}</span><small>{{ site.place }}</small></h2>
        <div class="plan">
          <article v-for="house in site.houses" :key="house.code" class="house" :style="{ width: house.width + 'px' }">
            <div class="house-head">
              <span class="code" :style="{ left: house.codeX + 'px' }">{{ house.code }}</span>
              <span class="type" :style="{ left: house.typeX + 'px' }">{{ house.type }}</span>
              <h3>{{ house.name }}</h3>
            </div>
            <div
              v-if="house.tiles.length"
              class="tiles"
              :style="{ gridTemplateColumns: `repeat(${house.columns}, 1fr)` }"
            >
              <div v-for="tile in house.tiles" :key="tile.code" class="tile" :style="{ background: tile.color }">
                <span v-if="tile.alerts" class="badge"><Icon name="bell" :size="12" />{{ tile.alerts }}</span>
                <b>{{ tile.code }}</b>
                <strong>{{ tile.status }}</strong>
              </div>
            </div>
          </article>
        </div>
      </section>

      <section>
        <h2 class="heading"><Icon name="palette" :size="19" /><span>Légende</span></h2>
        <ul class="legend">
          <li v-for="entry in legend" :key="entry.label">
            <i :style="{ background: entry.color }"></i>{{ entry.label }}
          </li>
        </ul>
      </section>
    </main>
  </div>
</template>

<style>
body {
  margin: 0;
  background: #fefefe;
}
</style>

<style scoped>
.app {
  display: flex;
  align-items: flex-start;
  height: 100vh;
  overflow: hidden;
  font-family: 'Liberation Sans', Arial, sans-serif;
  color: #1b2e1b;
}
h1, h2, h3, p, ul { margin: 0; padding: 0; }
ul { list-style: none; }
a { color: inherit; text-decoration: none; }
svg { flex: none; display: block; }

.sidebar {
  flex: none;
  box-sizing: border-box;
  width: 306px;
  padding: 27px 0 0 2px;
  border-right: 1px solid #d8d8d8;
  border-bottom: 2px solid #c8c8c8;
  background: linear-gradient(#f4f6fb, #f4f6fb) top / 100% 27px no-repeat, #fafafa;
  box-shadow: 2px 0 6px rgba(0, 0, 0, 0.06);
}
.search {
  display: flex;
  align-items: center;
  justify-content: space-between;
  box-sizing: border-box;
  width: 228px;
  height: 34px;
  padding: 0 8px;
  border-bottom: 1px solid #d2d2d2;
  border-radius: 4px;
}
.search input {
  width: 180px;
  padding: 0;
  border: 0;
  outline: 0;
  background: none;
  font: 13px/20px 'Liberation Sans', Arial, sans-serif;
}
.search input::placeholder { color: #949494; opacity: 1; }
.caret { fill: #757575; }
.menu { padding-top: 15px; }
.group {
  padding: 12px 8px 9px;
  border-top: 1px solid #d9d9d9;
}
.group:first-child { border-color: transparent; }
.group:last-child { padding-bottom: 4px; }
.group h2 {
  display: flex;
  align-items: center;
  margin-bottom: 3px;
  color: #000;
  font-size: 13px;
  line-height: 24px;
}
.group-icon { width: 24px; color: #2e7d32; }
.group li { color: #000; font-size: 13px; line-height: 26px; }

main { flex: 1; min-width: 0; padding: 15px 34px 0; }

.bar {
  display: flex;
  flex-wrap: wrap;
  gap: 8px;
  padding: 10px 12px 9px;
  border: 1px solid #dbe7d3;
  border-radius: 20px;
  background: linear-gradient(135deg, #ebf5e8 0%, #f2f7ec 50%, #e4f2f1 100%);
}
.pill {
  display: flex;
  align-items: center;
  gap: 7px;
  box-sizing: border-box;
  height: 38px;
  padding: 0 15px 2px;
  border: 1px solid #dbe7d3;
  border-radius: 13px;
  background: #fff;
  color: #304a2b;
  font: bold 15px/20px 'Liberation Sans', Arial, sans-serif;
  white-space: nowrap;
  cursor: pointer;
}
.pill svg { opacity: 0.8; }
.mode { padding: 0 16px 2px; }
.pill.active {
  border-color: transparent;
  background: linear-gradient(135deg, #2e7d32, #4c9a36) border-box;
  color: #fff;
  box-shadow: 0 4px 12px rgba(46, 125, 50, 0.3);
}

.hero {
  box-sizing: border-box;
  min-height: 120px;
  margin: 18px 0 20px;
  padding: 28px 31px 20px;
  border-radius: 22px;
  background: linear-gradient(135deg, #1b5e20 0%, #4c9a36 50%, #17a2a2 100%);
  box-shadow: 0 10px 30px rgba(27, 94, 32, 0.25);
  color: #fff;
}
.hero h1 {
  display: flex;
  align-items: center;
  gap: 12px;
  font-size: 28px;
  line-height: 36px;
}
.hero h1 svg { opacity: 0.92; }
.hero p { margin-top: 7px; font-size: 16px; line-height: 22px; opacity: 0.95; }

.heading {
  display: flex;
  align-items: center;
  gap: 11px;
  margin: 28px 0 12px;
  padding-bottom: 11px;
  border-bottom: 2px solid #dbe5d3;
  font-size: 19px;
  line-height: 24px;
}
.heading svg { color: #2e7d32; }
.heading small { font-size: 16px; }

.plan {
  position: relative;
  box-sizing: border-box;
  height: 36px;
  border: 1px solid #dbe7d3;
  border-radius: 18px;
  background: #fff;
  box-shadow: 0 8px 24px rgba(0, 0, 0, 0.05);
}
/* Houses are pinned to the site plan and may run over the sections below it. */
.house {
  position: absolute;
  z-index: 1;
  top: 17px;
  left: 19px;
  box-sizing: border-box;
  height: 530px;
  padding: 0 4px;
  border: 2px solid #fff;
  border-radius: 10px;
  box-shadow: 0 4px 12px rgba(0, 0, 0, 0.2);
}
.house-head { position: relative; height: 68px; }
.code, .type { position: absolute; white-space: nowrap; }
.code {
  top: 9px;
  color: #0a1464;
  font-size: 12px;
  font-weight: bold;
  line-height: 16px;
  letter-spacing: 1px;
  text-shadow: 0 1px 2px rgba(0, 0, 0, 0.4);
}
.type {
  top: 5px;
  color: #fff;
  font-size: 12px;
  line-height: 16px;
  text-shadow: 0 1px 2px rgba(0, 0, 0, 0.5);
}
.house h3 {
  padding-top: 35px;
  color: #fff;
  font-size: 17px;
  line-height: 20px;
  white-space: nowrap;
}
.tiles {
  display: grid;
  gap: 7px;
  grid-auto-rows: 203px;
  height: 411px;
  border-radius: 10px;
  background: #eff5ec;
  box-shadow: 0 0 0 1px #cfdcc6;
}
.tile {
  position: relative;
  display: flex;
  flex-direction: column;
  align-items: center;
  justify-content: center;
  border-radius: 9px;
  color: #fff;
  font-size: 11px;
  line-height: 17px;
  text-shadow: 0 1px 2px rgba(0, 0, 0, 0.5);
}
.tile b { letter-spacing: 1px; }
.badge {
  position: absolute;
  top: 5px;
  right: 6px;
  display: flex;
  align-items: center;
  gap: 4px;
  padding: 0 6px;
  border-radius: 9px;
  background: rgba(0, 0, 0, 0.32);
  font-size: 12px;
  line-height: 16px;
  text-shadow: none;
}

.legend {
  display: flex;
  flex-wrap: wrap;
  gap: 12px 32px;
  padding-top: 4px;
  color: #4a5f4a;
  font-size: 11px;
  line-height: 14px;
}
.legend li { display: flex; align-items: center; gap: 12px; }
.legend i { width: 14px; height: 14px; border-radius: 4px; }
</style>
